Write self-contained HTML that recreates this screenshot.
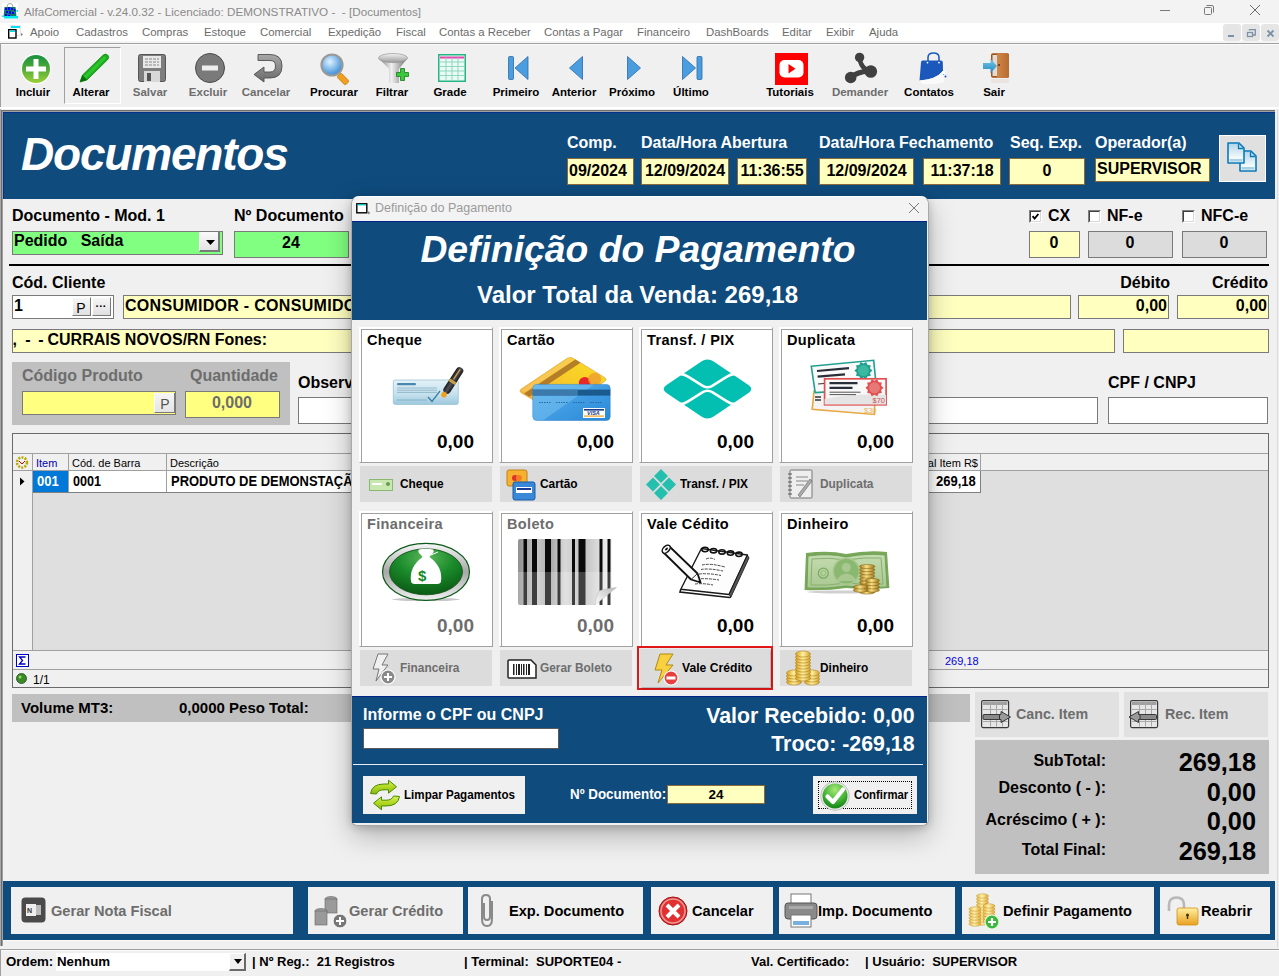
<!DOCTYPE html>
<html><head><meta charset="utf-8"><title>AlfaComercial</title>
<style>
html,body{margin:0;padding:0;}
body{width:1279px;height:976px;position:relative;overflow:hidden;background:#f0f0f0;font-family:"Liberation Sans",sans-serif;}
.a{position:absolute;}
.t{position:absolute;white-space:nowrap;font-weight:bold;}
svg.a{overflow:visible;}
</style></head><body>

<div class="a" style="left:0px;top:0px;width:1279px;height:23px;background:#f3f3f3;"></div>
<svg class="a" style="left:2px;top:3px" width="16" height="16" viewBox="0 0 16 16"><rect x="0" y="0" width="16" height="16" fill="#fff"/><path d="M5 4 Q5 0.5 8 0.5 Q11 0.5 11 4" fill="none" stroke="#a8a8a8" stroke-width="1"/><path d="M2.5 4 H13.5 L14.5 14 H1.5 Z" fill="#107868"/><g fill="#0000ff"><rect x="3" y="5" width="2" height="2"/><rect x="6" y="4" width="2" height="3"/><rect x="9" y="5" width="2" height="2"/><rect x="12" y="6" width="1.5" height="2"/><rect x="4" y="8" width="2" height="2"/><rect x="7" y="8" width="2" height="3"/><rect x="10" y="9" width="2" height="2"/><rect x="3" y="11" width="2" height="2"/><rect x="6" y="12" width="2" height="2"/></g><rect x="2" y="13" width="14" height="2.5" fill="#00e8f0"/><rect x="14.5" y="7" width="1.5" height="2" fill="#00e8f0"/><rect x="0" y="12.5" width="1.5" height="1.5" fill="#00e8f0"/></svg>
<div class="t" style="top:6.06px;font-size:11.7px;line-height:11.7px;color:#8a8a8a;font-weight:normal;left:24px;">AlfaComercial - v.24.0.32 - Licenciado: DEMONSTRATIVO -&nbsp; - [Documentos]</div>
<div class="a" style="left:1160px;top:10px;width:10px;height:1px;background:#7a7a7a;"></div>
<svg class="a" style="left:1204px;top:5px" width="10" height="10" viewBox="0 0 10 10"><rect x="0.5" y="2.5" width="7" height="7" rx="1" fill="none" stroke="#7a7a7a"/><path d="M2.5 0.5 H8 Q9.5 0.5 9.5 2 V7.5" fill="none" stroke="#7a7a7a"/></svg>
<svg class="a" style="left:1250px;top:5px" width="10" height="10" viewBox="0 0 10 10"><path d="M0 0 L10 10 M10 0 L0 10" stroke="#6a6a6a" stroke-width="1"/></svg>
<div class="a" style="left:0px;top:23px;width:1279px;height:19px;background:#ffffff;"></div>
<svg class="a" style="left:8px;top:25px" width="16" height="14" viewBox="0 0 16 14"><rect x="2.5" y="0.5" width="10" height="10" fill="#fff" stroke="#e0e0e0" stroke-width="0.8"/><rect x="3" y="1" width="9" height="2" fill="#00e0f0"/><path d="M13 8 L15 9.5 L13 11 Z" fill="#777"/><rect x="0.7" y="4.7" width="7.3" height="8.3" fill="#fff" stroke="#000" stroke-width="1.4"/><rect x="1.5" y="5.5" width="5.5" height="1.5" fill="#00e0f0"/></svg>
<div class="t" style="top:27.31px;font-size:11.4px;line-height:11.4px;color:#6b6b6b;font-weight:normal;left:30px;">Apoio</div>
<div class="t" style="top:27.31px;font-size:11.4px;line-height:11.4px;color:#6b6b6b;font-weight:normal;left:76px;">Cadastros</div>
<div class="t" style="top:27.31px;font-size:11.4px;line-height:11.4px;color:#6b6b6b;font-weight:normal;left:142px;">Compras</div>
<div class="t" style="top:27.31px;font-size:11.4px;line-height:11.4px;color:#6b6b6b;font-weight:normal;left:204px;">Estoque</div>
<div class="t" style="top:27.31px;font-size:11.4px;line-height:11.4px;color:#6b6b6b;font-weight:normal;left:260px;">Comercial</div>
<div class="t" style="top:27.31px;font-size:11.4px;line-height:11.4px;color:#6b6b6b;font-weight:normal;left:328px;">Expedição</div>
<div class="t" style="top:27.31px;font-size:11.4px;line-height:11.4px;color:#6b6b6b;font-weight:normal;left:396px;">Fiscal</div>
<div class="t" style="top:27.31px;font-size:11.4px;line-height:11.4px;color:#6b6b6b;font-weight:normal;left:439px;">Contas a Receber</div>
<div class="t" style="top:27.31px;font-size:11.4px;line-height:11.4px;color:#6b6b6b;font-weight:normal;left:544px;">Contas a Pagar</div>
<div class="t" style="top:27.31px;font-size:11.4px;line-height:11.4px;color:#6b6b6b;font-weight:normal;left:637px;">Financeiro</div>
<div class="t" style="top:27.31px;font-size:11.4px;line-height:11.4px;color:#6b6b6b;font-weight:normal;left:706px;">DashBoards</div>
<div class="t" style="top:27.31px;font-size:11.4px;line-height:11.4px;color:#6b6b6b;font-weight:normal;left:782px;">Editar</div>
<div class="t" style="top:27.31px;font-size:11.4px;line-height:11.4px;color:#6b6b6b;font-weight:normal;left:826px;">Exibir</div>
<div class="t" style="top:27.31px;font-size:11.4px;line-height:11.4px;color:#6b6b6b;font-weight:normal;left:869px;">Ajuda</div>
<div class="a" style="left:1223px;top:24px;width:18px;height:17px;background:#e5e5e5;border-radius:3px;"></div>
<div class="a" style="left:1242px;top:24px;width:18px;height:17px;background:#e5e5e5;border-radius:3px;"></div>
<div class="a" style="left:1261px;top:24px;width:18px;height:17px;background:#e5e5e5;border-radius:3px;"></div>
<div class="a" style="left:1228px;top:35px;width:6px;height:2px;background:#7b91a8;"></div>
<svg class="a" style="left:1247px;top:29px" width="9" height="8" viewBox="0 0 9 8"><rect x="0.5" y="3.5" width="5" height="4" fill="none" stroke="#7b91a8" stroke-width="1.3"/><path d="M2.5 1.5 V0.7 H8.3 V6 H6" fill="none" stroke="#7b91a8" stroke-width="1.3"/></svg>
<svg class="a" style="left:1267px;top:30px" width="7" height="7" viewBox="0 0 7 7"><path d="M0.5 0.5 L6.5 6.5 M6.5 0.5 L0.5 6.5" stroke="#7b91a8" stroke-width="1.8"/></svg>
<div class="a" style="left:0px;top:41px;width:1279px;height:2px;background:#f4f4f4;"></div>
<div class="a" style="left:0px;top:43px;width:1279px;height:1px;background:#a0a0a0;"></div>
<div class="a" style="left:0px;top:44px;width:1279px;height:64px;background:#f0f0f0;"></div>
<div class="a" style="left:1px;top:44px;width:1279px;height:1px;background:#fafafa;"></div>
<div class="a" style="left:0px;top:43px;width:1px;height:65px;background:#a0a0a0;"></div>
<div class="a" style="left:0px;top:107px;width:1279px;height:2px;background:#ffffff;"></div>
<div class="a" style="left:0px;top:109px;width:1279px;height:1px;background:#a0a0a0;"></div>
<div class="a" style="left:64px;top:47px;width:55px;height:55px;border-top:1px solid #a0a0a0;border-left:1px solid #a0a0a0;border-right:1px solid #fff;border-bottom:1px solid #fff;"></div>
<div class="t" style="top:86.72px;font-size:11.5px;line-height:11.5px;color:#000;left:-367px;width:800px;text-align:center;">Incluir</div>
<div class="t" style="top:86.72px;font-size:11.5px;line-height:11.5px;color:#000;left:-309px;width:800px;text-align:center;">Alterar</div>
<div class="t" style="top:86.72px;font-size:11.5px;line-height:11.5px;color:#6d6d6d;left:-250px;width:800px;text-align:center;">Salvar</div>
<div class="t" style="top:86.72px;font-size:11.5px;line-height:11.5px;color:#6d6d6d;left:-192px;width:800px;text-align:center;">Excluir</div>
<div class="t" style="top:86.72px;font-size:11.5px;line-height:11.5px;color:#6d6d6d;left:-134px;width:800px;text-align:center;">Cancelar</div>
<div class="t" style="top:86.72px;font-size:11.5px;line-height:11.5px;color:#000;left:-66px;width:800px;text-align:center;">Procurar</div>
<div class="t" style="top:86.72px;font-size:11.5px;line-height:11.5px;color:#000;left:-8px;width:800px;text-align:center;">Filtrar</div>
<div class="t" style="top:86.72px;font-size:11.5px;line-height:11.5px;color:#000;left:50px;width:800px;text-align:center;">Grade</div>
<div class="t" style="top:86.72px;font-size:11.5px;line-height:11.5px;color:#000;left:116px;width:800px;text-align:center;">Primeiro</div>
<div class="t" style="top:86.72px;font-size:11.5px;line-height:11.5px;color:#000;left:174px;width:800px;text-align:center;">Anterior</div>
<div class="t" style="top:86.72px;font-size:11.5px;line-height:11.5px;color:#000;left:232px;width:800px;text-align:center;">Próximo</div>
<div class="t" style="top:86.72px;font-size:11.5px;line-height:11.5px;color:#000;left:291px;width:800px;text-align:center;">Último</div>
<div class="t" style="top:86.72px;font-size:11.5px;line-height:11.5px;color:#000;left:390px;width:800px;text-align:center;">Tutoriais</div>
<div class="t" style="top:86.72px;font-size:11.5px;line-height:11.5px;color:#6d6d6d;left:460px;width:800px;text-align:center;">Demander</div>
<div class="t" style="top:86.72px;font-size:11.5px;line-height:11.5px;color:#000;left:529px;width:800px;text-align:center;">Contatos</div>
<div class="t" style="top:86.72px;font-size:11.5px;line-height:11.5px;color:#000;left:594px;width:800px;text-align:center;">Sair</div>
<svg class="a" style="left:20px;top:53px" width="32" height="32" viewBox="0 0 32 32"><defs><linearGradient id="gi" x1="0" y1="0" x2="0" y2="1"><stop offset="0" stop-color="#1a9040"/><stop offset="0.45" stop-color="#4aa838"/><stop offset="1" stop-color="#9ad038"/></linearGradient></defs><circle cx="16" cy="16" r="15.2" fill="#fff"/><circle cx="16" cy="16" r="14" fill="url(#gi)"/><path d="M13.5 6 H18.5 V13.5 H26 V18.5 H18.5 V26 H13.5 V18.5 H6 V13.5 H13.5 Z" fill="#fff"/></svg>
<svg class="a" style="left:78px;top:52px" width="32" height="32" viewBox="0 0 32 32"><path d="M2 30 L4.5 23 L25 3.2 Q27.5 1 29.8 3.2 Q31.8 5.5 29.5 7.8 L9 28 Z" fill="#18b018" stroke="#0a800a" stroke-width="0.7"/><path d="M5.5 24.5 L26.5 4 L28.5 6 L8 26.5 Z" fill="#40d040" opacity="0.6"/><path d="M2 30 L4.5 23 L9 28 Z" fill="#087008"/></svg>
<svg class="a" style="left:138px;top:54px" width="28" height="28" viewBox="0 0 28 28"><rect x="0.5" y="0.5" width="27" height="27" rx="2" fill="#7d7d7d" stroke="#555"/><rect x="5" y="2" width="18" height="12" fill="#e8e8e8"/><path d="M7 5 H21 M7 8 H21 M7 11 H21" stroke="#888" stroke-width="1" stroke-dasharray="3 1"/><rect x="6" y="17" width="16" height="11" fill="#d8d8d8"/><rect x="9" y="19" width="4" height="8" fill="#555"/></svg>
<svg class="a" style="left:195px;top:53px" width="30" height="30" viewBox="0 0 30 30"><circle cx="15" cy="15" r="14.5" fill="#7a7a7a" stroke="#4a4a4a"/><rect x="7" y="12.5" width="16" height="5" fill="#eee"/></svg>
<svg class="a" style="left:253px;top:54px" width="30" height="29" viewBox="0 0 30 29"><defs><linearGradient id="arr" x1="0" y1="0" x2="0" y2="1"><stop offset="0" stop-color="#a8a8a8"/><stop offset="1" stop-color="#6a6a6a"/></linearGradient></defs><path d="M5 0.5 H17 Q29 0.5 29 12 Q29 24 17 24 H11 V28 L1 20.5 L11 13 V18 H17 Q22.5 18 22.5 12 Q22.5 6.5 17 6.5 H5 Z" fill="url(#arr)" stroke="#505050" stroke-width="0.9" stroke-linejoin="round"/></svg>
<svg class="a" style="left:320px;top:53px" width="32" height="32" viewBox="0 0 32 32"><defs><radialGradient id="lens" cx="40%" cy="35%" r="65%"><stop offset="0" stop-color="#dff2ff"/><stop offset="1" stop-color="#3a8ed8"/></radialGradient></defs><rect x="20" y="20" width="6" height="12" rx="2" transform="rotate(-45 23 26)" fill="#f0a020" stroke="#b07010" stroke-width="0.6"/><circle cx="12" cy="12" r="10.5" fill="url(#lens)" stroke="#999" stroke-width="2.2"/></svg>
<svg class="a" style="left:378px;top:53px" width="32" height="31" viewBox="0 0 32 31"><defs><linearGradient id="fun" x1="0" x2="1"><stop offset="0" stop-color="#7a7a7a"/><stop offset="0.45" stop-color="#f0f0f0"/><stop offset="1" stop-color="#6a6a6a"/></linearGradient><linearGradient id="funt" x1="0" y1="0" x2="0" y2="1"><stop offset="0" stop-color="#f4f4f4"/><stop offset="1" stop-color="#9a9a9a"/></linearGradient></defs><path d="M0.5 5 Q15 13 29.5 5 L21 16 V30 L11 30 V16 Z" fill="url(#fun)"/><ellipse cx="15" cy="5" rx="14.5" ry="4.5" fill="url(#funt)" stroke="#8a8a8a" stroke-width="0.6"/><path d="M18.5 19.5 H22.5 V15.5 H26.5 V19.5 H30.5 V23.5 H26.5 V27.5 H22.5 V23.5 H18.5 Z" fill="#3cc83c" stroke="#1a7a1a" stroke-width="0.8"/></svg>
<svg class="a" style="left:438px;top:54px" width="28" height="28" viewBox="0 0 28 28"><rect x="0.75" y="0.75" width="26.5" height="26.5" fill="#eafaf4" stroke="#24b384" stroke-width="1.5"/><rect x="2" y="2.5" width="24" height="2" fill="#f040b0"/><path d="M2 8 H26 M2 12.5 H26 M2 17 H26 M2 21.5 H26" stroke="#7ccfb2" stroke-width="0.8"/><path d="M8 2 V26 M14 2 V26 M20 2 V26" stroke="#7ccfb2" stroke-width="0.8"/></svg>
<svg class="a" style="left:508px;top:56px" width="21" height="24" viewBox="0 0 21 24"><rect x="0.5" y="0.5" width="5" height="23" rx="1" fill="#4a9ee0" stroke="#2a6aa8" stroke-width="0.8"/><path d="M20 0.5 V23.5 L7 12 Z" fill="#4a9ee0" stroke="#2a6aa8" stroke-width="0.8" stroke-linejoin="round"/></svg>
<svg class="a" style="left:569px;top:56px" width="14" height="24" viewBox="0 0 14 24"><path d="M13.5 0.5 V23.5 L0.5 12 Z" fill="#4a9ee0" stroke="#2a6aa8" stroke-width="0.8" stroke-linejoin="round"/></svg>
<svg class="a" style="left:627px;top:56px" width="14" height="24" viewBox="0 0 14 24"><path d="M0.5 0.5 V23.5 L13.5 12 Z" fill="#4a9ee0" stroke="#2a6aa8" stroke-width="0.8" stroke-linejoin="round"/></svg>
<svg class="a" style="left:682px;top:56px" width="21" height="24" viewBox="0 0 21 24"><path d="M0.5 0.5 V23.5 L13.5 12 Z" fill="#4a9ee0" stroke="#2a6aa8" stroke-width="0.8" stroke-linejoin="round"/><rect x="15" y="0.5" width="5" height="23" rx="1" fill="#4a9ee0" stroke="#2a6aa8" stroke-width="0.8"/></svg>
<svg class="a" style="left:775px;top:53px" width="33" height="32" viewBox="0 0 33 32"><rect x="0" y="0" width="33" height="32" fill="#ff0000"/><rect x="4.5" y="7" width="24" height="17.5" rx="5" fill="#fff"/><path d="M13.5 11 L20.5 15.75 L13.5 20.5 Z" fill="#ff0000"/></svg>
<svg class="a" style="left:845px;top:52px" width="32" height="32" viewBox="0 0 32 32"><path d="M14.6 5.4 Q15.5 17 25.8 19.5" stroke="#404040" stroke-width="4.6" fill="none"/><path d="M5.7 25.5 Q14 18.5 25.8 19.5" stroke="#404040" stroke-width="5.2" fill="none"/><circle cx="14.6" cy="5.4" r="4.7" fill="#404040"/><circle cx="25.8" cy="19.5" r="6.3" fill="#404040"/><circle cx="5.7" cy="25.5" r="5.8" fill="#404040"/></svg>
<svg class="a" style="left:918px;top:52px" width="32" height="34" viewBox="0 0 32 34"><path d="M10 9 V5.5 Q10 1 15.5 1 Q21 1 21 5.5 V9" fill="none" stroke="#1e5bc0" stroke-width="1.6"/><path d="M4.5 8.5 H23 Q24.8 8.5 24.8 10.5 L25 19 Q18 27.5 1.5 28.5 L3 10.5 Q3.2 8.5 4.5 8.5 Z" fill="#1c58bc"/><circle cx="9.5" cy="10.6" r="0.9" fill="#fff"/><circle cx="21" cy="10.6" r="0.9" fill="#fff"/><path d="M1.5 28.5 Q18 27.5 25 19 L26 30 Q16 33 4 32 Z" fill="#fafafa"/><circle cx="27.5" cy="24.5" r="1" fill="#1c58bc"/><circle cx="25.5" cy="22.5" r="0.6" fill="#6a9ae0"/><rect x="24" y="19" width="3" height="3" fill="#fff"/></svg>
<svg class="a" style="left:982px;top:52px" width="30" height="32" viewBox="0 0 30 32"><defs><linearGradient id="arw" x1="0" y1="0" x2="0" y2="1"><stop offset="0" stop-color="#70c8e8"/><stop offset="1" stop-color="#2a88c0"/></linearGradient><linearGradient id="dor" x1="0" x2="1"><stop offset="0" stop-color="#d08848"/><stop offset="1" stop-color="#b86a30"/></linearGradient></defs><rect x="9" y="1.2" width="18" height="24.5" rx="1.8" fill="#a8501a"/><rect x="10.5" y="3" width="5" height="21" fill="#dcdcdc"/><rect x="15" y="1.5" width="12" height="24.2" rx="1.2" fill="url(#dor)"/><circle cx="17" cy="13" r="0.9" fill="#5a2008"/><path d="M1 11 H8.5 V7 L15 14 L8.5 21 V17 H1 Z" fill="url(#arw)"/><rect x="9" y="27" width="18" height="4" fill="#e4dcd4" opacity="0.6"/></svg>
<div class="a" style="left:0px;top:109px;width:1279px;height:837px;background:#f0f0f0;"></div>
<div class="a" style="left:0px;top:109px;width:1px;height:837px;background:#a8a8a8;"></div>
<div class="a" style="left:1px;top:110px;width:1274px;height:1px;background:#6f6f6f;"></div>
<div class="a" style="left:1px;top:110px;width:1px;height:836px;background:#6f6f6f;"></div>
<div class="a" style="left:2px;top:111px;width:1273px;height:1px;background:#a0a0a0;"></div>
<div class="a" style="left:2px;top:111px;width:1px;height:835px;background:#a0a0a0;"></div>
<div class="a" style="left:1275px;top:109px;width:4px;height:837px;background:#f0f0f0;"></div>
<div class="a" style="left:1277px;top:109px;width:1px;height:838px;background:#dcdcdc;"></div>
<div class="a" style="left:3px;top:112px;width:1272px;height:87px;background:#0f4b7d;border-top:1px solid #06308a;border-left:1px solid #06308a;box-sizing:border-box;"></div>
<div class="t" style="top:131.40px;font-size:46px;line-height:46px;color:#fff;font-style:italic;letter-spacing:-1.2px;left:21px;">Documentos</div>
<div class="t" style="top:134.90px;font-size:16px;line-height:16px;color:#fff;left:567px;">Comp.</div>
<div class="t" style="top:134.90px;font-size:16px;line-height:16px;color:#fff;left:641px;">Data/Hora Abertura</div>
<div class="t" style="top:134.90px;font-size:16px;line-height:16px;color:#fff;left:819px;">Data/Hora Fechamento</div>
<div class="t" style="top:134.90px;font-size:16px;line-height:16px;color:#fff;left:1010px;">Seq. Exp.</div>
<div class="t" style="top:134.90px;font-size:16px;line-height:16px;color:#fff;left:1095px;">Operador(a)</div>
<div class="a" style="left:567px;top:158px;width:65px;height:25px;background:#ffffc0;border:1px solid #8a6a3a;"></div>
<div class="t" style="top:163.40px;font-size:16px;line-height:16px;color:#000;left:569px;">09/2024</div>
<div class="a" style="left:641px;top:158px;width:86px;height:25px;background:#ffffc0;border:1px solid #8a6a3a;"></div>
<div class="t" style="top:163.40px;font-size:16px;line-height:16px;color:#000;left:285.0px;width:800px;text-align:center;">12/09/2024</div>
<div class="a" style="left:737px;top:158px;width:68px;height:25px;background:#ffffc0;border:1px solid #8a6a3a;"></div>
<div class="t" style="top:163.40px;font-size:16px;line-height:16px;color:#000;left:372.0px;width:800px;text-align:center;">11:36:55</div>
<div class="a" style="left:819px;top:158px;width:93px;height:25px;background:#ffffc0;border:1px solid #8a6a3a;"></div>
<div class="t" style="top:163.40px;font-size:16px;line-height:16px;color:#000;left:466.5px;width:800px;text-align:center;">12/09/2024</div>
<div class="a" style="left:923px;top:158px;width:76px;height:25px;background:#ffffc0;border:1px solid #8a6a3a;"></div>
<div class="t" style="top:163.40px;font-size:16px;line-height:16px;color:#000;left:562.0px;width:800px;text-align:center;">11:37:18</div>
<div class="a" style="left:1009px;top:158px;width:74px;height:25px;background:#ffffc0;border:1px solid #8a6a3a;"></div>
<div class="t" style="top:163.40px;font-size:16px;line-height:16px;color:#000;left:647.0px;width:800px;text-align:center;">0</div>
<div class="a" style="left:1095px;top:158px;width:113px;height:22px;background:#ffffc0;border:1px solid #8a6a3a;"></div>
<div class="t" style="top:161.40px;font-size:16px;line-height:16px;color:#000;left:1097px;">SUPERVISOR</div>
<div class="a" style="left:1219px;top:135px;width:47px;height:47px;background:#e0e0e0;border:1px solid #fff;box-sizing:border-box;"></div>
<svg class="a" style="left:1227px;top:142px" width="32" height="32" viewBox="0 0 32 32"><defs><linearGradient id="docg" x1="0" y1="0" x2="0" y2="1"><stop offset="0" stop-color="#b0d4e8"/><stop offset="0.75" stop-color="#f4fafc"/></linearGradient></defs><path d="M13 9 H24 L29 14 V29 H13 Z" fill="url(#docg)" stroke="#0a7ab8" stroke-width="1.6" stroke-linejoin="round"/><path d="M23.5 10 V14.5 H28" fill="none" stroke="#0a7ab8" stroke-width="1.3"/><rect x="14.5" y="25" width="13" height="2.6" fill="#a8d0e4"/><path d="M1 1 H12 L17 6 V21 H1 Z" fill="url(#docg)" stroke="#0a7ab8" stroke-width="1.6" stroke-linejoin="round"/><path d="M11.5 2 V6.5 H16" fill="none" stroke="#0a7ab8" stroke-width="1.3"/><rect x="2.5" y="17" width="13" height="2.6" fill="#a8d0e4"/></svg>
<div class="t" style="top:208.40px;font-size:16px;line-height:16px;color:#000;left:12px;">Documento - Mod. 1</div>
<div class="t" style="top:208.40px;font-size:16px;line-height:16px;color:#000;left:234px;">Nº Documento</div>
<div class="a" style="left:12px;top:231px;width:209px;height:22px;background:#80ff80;border:1px solid #7a7a7a;"></div>
<div class="t" style="top:233.40px;font-size:16px;line-height:16px;color:#000;left:14px;">Pedido&nbsp;&nbsp; Saída</div>
<div class="a" style="left:199px;top:232px;width:21px;height:20px;background:linear-gradient(#fafafa,#e4e4e4);border-left:1px solid #fff;border-right:2px solid #7a7a7a;border-bottom:2px solid #7a7a7a;box-sizing:border-box;"></div>
<svg class="a" style="left:206px;top:240px" width="9" height="5" viewBox="0 0 9 5"><path d="M0 0 H9 L4.5 5 Z" fill="#000"/></svg>
<div class="a" style="left:234px;top:231px;width:113px;height:25px;background:#80ff80;border:1px solid #7a7a7a;"></div>
<div class="t" style="top:235.40px;font-size:16px;line-height:16px;color:#000;left:-109px;width:800px;text-align:center;">24</div>
<div class="a" style="left:1029px;top:210px;width:13px;height:13px;background:#fff;border-top:1px solid #808080;border-left:1px solid #808080;border-right:1px solid #fff;border-bottom:1px solid #fff;box-sizing:border-box;"></div>
<div class="a" style="left:1030px;top:211px;width:11px;height:11px;border-top:1px solid #404040;border-left:1px solid #404040;border-right:1px solid #d8d8d8;border-bottom:1px solid #d8d8d8;box-sizing:border-box;"></div>
<svg class="a" style="left:1032px;top:213px" width="7" height="7" viewBox="0 0 7 7"><path d="M0.6 3.2 L2.6 5.6 L6.4 1" stroke="#000" stroke-width="1.9" fill="none"/></svg>
<div class="t" style="top:208.40px;font-size:16px;line-height:16px;color:#000;left:1048px;">CX</div>
<div class="a" style="left:1088px;top:210px;width:13px;height:13px;background:#fff;border-top:1px solid #808080;border-left:1px solid #808080;border-right:1px solid #fff;border-bottom:1px solid #fff;box-sizing:border-box;"></div>
<div class="a" style="left:1089px;top:211px;width:11px;height:11px;border-top:1px solid #404040;border-left:1px solid #404040;border-right:1px solid #d8d8d8;border-bottom:1px solid #d8d8d8;box-sizing:border-box;"></div>
<div class="t" style="top:208.40px;font-size:16px;line-height:16px;color:#000;left:1107px;">NF-e</div>
<div class="a" style="left:1182px;top:210px;width:13px;height:13px;background:#fff;border-top:1px solid #808080;border-left:1px solid #808080;border-right:1px solid #fff;border-bottom:1px solid #fff;box-sizing:border-box;"></div>
<div class="a" style="left:1183px;top:211px;width:11px;height:11px;border-top:1px solid #404040;border-left:1px solid #404040;border-right:1px solid #d8d8d8;border-bottom:1px solid #d8d8d8;box-sizing:border-box;"></div>
<div class="t" style="top:208.40px;font-size:16px;line-height:16px;color:#000;left:1201px;">NFC-e</div>
<div class="a" style="left:1029px;top:231px;width:49px;height:25px;background:#ffffc0;border:1px solid #7a7a7a;"></div>
<div class="t" style="top:235.40px;font-size:16px;line-height:16px;color:#000;left:654px;width:800px;text-align:center;">0</div>
<div class="a" style="left:1088px;top:231px;width:83px;height:25px;background:#dcdcdc;border:1px solid #7a7a7a;"></div>
<div class="t" style="top:235.40px;font-size:16px;line-height:16px;color:#000;left:730px;width:800px;text-align:center;">0</div>
<div class="a" style="left:1182px;top:231px;width:83px;height:25px;background:#dcdcdc;border:1px solid #7a7a7a;"></div>
<div class="t" style="top:235.40px;font-size:16px;line-height:16px;color:#000;left:824px;width:800px;text-align:center;">0</div>
<div class="a" style="left:9px;top:264px;width:1260px;height:2px;background:#000;"></div>
<div class="t" style="top:275.40px;font-size:16px;line-height:16px;color:#000;left:12px;">Cód. Cliente</div>
<div class="t" style="top:275.40px;font-size:16px;line-height:16px;color:#000;right:109px;text-align:right;">Débito</div>
<div class="t" style="top:275.40px;font-size:16px;line-height:16px;color:#000;right:11px;text-align:right;">Crédito</div>
<div class="a" style="left:12px;top:295px;width:100px;height:22px;background:#ffffff;border:1px solid #7a7a7a;"></div>
<div class="t" style="top:298.40px;font-size:16px;line-height:16px;color:#000;left:14px;">1</div>
<div class="a" style="left:72px;top:297px;width:19px;height:19px;background:linear-gradient(#f6f6f6,#e0e0e0);border-right:1px solid #7a7a7a;border-bottom:1px solid #7a7a7a;border-left:1px solid #fff;border-top:1px solid #fff;box-sizing:border-box;"></div>
<div class="a" style="left:92px;top:297px;width:19px;height:19px;background:linear-gradient(#f6f6f6,#e0e0e0);border-right:1px solid #7a7a7a;border-bottom:1px solid #7a7a7a;border-left:1px solid #fff;border-top:1px solid #fff;box-sizing:border-box;"></div>
<div class="t" style="top:301.10px;font-size:14px;line-height:14px;color:#000;font-weight:normal;left:-319px;width:800px;text-align:center;">P</div>
<div class="t" style="top:300.65px;font-size:11px;line-height:11px;color:#000;left:-299px;width:800px;text-align:center;">···</div>
<div class="a" style="left:123px;top:295px;width:946px;height:22px;background:#ffffc0;border:1px solid #7a7a7a;"></div>
<div class="t" style="top:298.40px;font-size:16px;line-height:16px;color:#000;letter-spacing:0.3px;left:125px;">CONSUMIDOR - CONSUMIDOR</div>
<div class="a" style="left:1078px;top:295px;width:89px;height:22px;background:#ffffc0;border:1px solid #7a7a7a;"></div>
<div class="t" style="top:298.40px;font-size:16px;line-height:16px;color:#000;right:112px;text-align:right;">0,00</div>
<div class="a" style="left:1177px;top:295px;width:90px;height:22px;background:#ffffc0;border:1px solid #7a7a7a;"></div>
<div class="t" style="top:298.40px;font-size:16px;line-height:16px;color:#000;right:12px;text-align:right;">0,00</div>
<div class="a" style="left:12px;top:329px;width:1101px;height:22px;background:#ffffc0;border:1px solid #7a7a7a;"></div>
<div class="t" style="top:331.90px;font-size:16px;line-height:16px;color:#000;left:12.5px;">,</div>
<div class="t" style="top:331.90px;font-size:16px;line-height:16px;color:#000;left:25.2px;">-</div>
<div class="t" style="top:331.90px;font-size:16px;line-height:16px;color:#000;left:38.2px;">-</div>
<div class="t" style="top:331.90px;font-size:16px;line-height:16px;color:#000;left:47.5px;">CURRAIS NOVOS/RN Fones:</div>
<div class="a" style="left:1123px;top:329px;width:144px;height:22px;background:#ffffc0;border:1px solid #7a7a7a;"></div>
<div class="a" style="left:12px;top:362px;width:278px;height:63px;background:#c0c0c0;"></div>
<div class="t" style="top:368.40px;font-size:16px;line-height:16px;color:#6d6d6d;left:22px;">Código Produto</div>
<div class="t" style="top:368.40px;font-size:16px;line-height:16px;color:#6d6d6d;left:190px;">Quantidade</div>
<div class="a" style="left:22px;top:391px;width:152px;height:22px;background:#ffff80;border:1px solid #7a7a7a;"></div>
<div class="a" style="left:154px;top:393px;width:21px;height:20px;background:linear-gradient(#f6f6f6,#e4e4e4);border-right:1px solid #7a7a7a;border-bottom:1px solid #7a7a7a;border-left:1px solid #fff;box-sizing:border-box;"></div>
<div class="t" style="top:397.10px;font-size:14px;line-height:14px;color:#555;font-weight:normal;left:-235px;width:800px;text-align:center;">P</div>
<div class="a" style="left:185px;top:391px;width:93px;height:25px;background:#ffff80;border:1px solid #7a7a7a;"></div>
<div class="t" style="top:395.40px;font-size:16px;line-height:16px;color:#6d6d6d;left:-168px;width:800px;text-align:center;">0,000</div>
<div class="t" style="top:375.40px;font-size:16px;line-height:16px;color:#000;left:298px;">Observação</div>
<div class="a" style="left:298px;top:397px;width:798px;height:25px;background:#ffffff;border:1px solid #7a7a7a;"></div>
<div class="t" style="top:375.40px;font-size:16px;line-height:16px;color:#000;left:1108px;">CPF / CNPJ</div>
<div class="a" style="left:1108px;top:397px;width:158px;height:25px;background:#ffffff;border:1px solid #7a7a7a;"></div>
<div class="a" style="left:12px;top:433px;width:1255px;height:253px;border:1px solid #6a6a6a;background:#f0f0f0;"></div>
<div class="a" style="left:13px;top:453px;width:1255px;height:1px;background:#a0a0a0;"></div>
<div class="a" style="left:13px;top:454px;width:1255px;height:16px;background:#f0f0f0;"></div>
<div class="a" style="left:13px;top:470px;width:1255px;height:1px;background:#a0a0a0;"></div>
<div class="a" style="left:33px;top:471px;width:1235px;height:179px;background:#dfdfdf;"></div>
<div class="a" style="left:13px;top:471px;width:19px;height:179px;background:#f0f0f0;"></div>
<div class="a" style="left:32px;top:454px;width:1px;height:196px;background:#a0a0a0;"></div>
<div class="a" style="left:68px;top:454px;width:1px;height:16px;background:#a0a0a0;"></div>
<div class="a" style="left:166px;top:454px;width:1px;height:16px;background:#a0a0a0;"></div>
<div class="a" style="left:980px;top:454px;width:1px;height:16px;background:#a0a0a0;"></div>
<div class="t" style="top:457.65px;font-size:11px;line-height:11px;color:#0000b0;font-weight:normal;left:36px;">Item</div>
<div class="t" style="top:457.65px;font-size:11px;line-height:11px;color:#000;font-weight:normal;left:72px;">Cód. de Barra</div>
<div class="t" style="top:457.65px;font-size:11px;line-height:11px;color:#000;font-weight:normal;left:170px;">Descrição</div>
<div class="t" style="top:457.65px;font-size:11px;line-height:11px;color:#000;font-weight:normal;right:301px;text-align:right;">Total Item R$</div>
<svg class="a" style="left:15px;top:456px" width="14" height="13" viewBox="0 0 14 13"><circle cx="7" cy="6.5" r="5" fill="none" stroke="#b8a800" stroke-width="2.5" stroke-dasharray="2 1.2"/><path d="M4 5 L7 8 L10 5" stroke="#c00" stroke-width="1" fill="none"/></svg>
<div class="a" style="left:33px;top:471px;width:948px;height:21px;background:#ffffff;"></div>
<div class="a" style="left:33px;top:471px;width:35px;height:21px;background:#0078d7;"></div>
<div class="a" style="left:33px;top:492px;width:948px;height:1px;background:#808080;"></div>
<div class="a" style="left:68px;top:471px;width:1px;height:21px;background:#a0a0a0;"></div>
<div class="a" style="left:166px;top:471px;width:1px;height:21px;background:#a0a0a0;"></div>
<div class="a" style="left:980px;top:471px;width:1px;height:21px;background:#808080;"></div>
<div class="t" style="top:474.40px;font-size:14px;line-height:14px;color:#fff;transform:scaleX(0.93);transform-origin:left center;left:37px;">001</div>
<div class="t" style="top:474.40px;font-size:14px;line-height:14px;color:#000;transform:scaleX(0.9);transform-origin:left center;left:73px;">0001</div>
<div class="t" style="top:474.40px;font-size:14px;line-height:14px;color:#000;transform:scaleX(0.925);transform-origin:left center;left:171px;">PRODUTO DE DEMONSTAÇÃO</div>
<div class="t" style="top:474.40px;font-size:14px;line-height:14px;color:#000;transform:scaleX(0.93);transform-origin:right center;right:303px;text-align:right;">269,18</div>
<svg class="a" style="left:19px;top:477px" width="6" height="9" viewBox="0 0 6 9"><path d="M1 0.5 L5.5 4.5 L1 8.5 Z" fill="#000"/></svg>
<div class="a" style="left:13px;top:650px;width:1255px;height:1px;background:#a0a0a0;"></div>
<div class="a" style="left:13px;top:651px;width:1255px;height:19px;background:#f0f0f0;"></div>
<div class="a" style="left:13px;top:669px;width:1255px;height:1px;background:#a0a0a0;"></div>
<svg class="a" style="left:16px;top:654px" width="13" height="13" viewBox="0 0 13 13"><rect x="0.5" y="0.5" width="12" height="12" fill="#fff" stroke="#0000c0"/><path d="M9.5 3 H3.5 L6.5 6.5 L3.5 10 H9.5" fill="none" stroke="#0000c0" stroke-width="1.3"/></svg>
<div class="t" style="top:655.95px;font-size:11px;line-height:11px;color:#0000e0;font-weight:normal;left:945px;">269,18</div>
<svg class="a" style="left:16px;top:673px" width="11" height="11" viewBox="0 0 11 11"><circle cx="5.5" cy="5.5" r="5" fill="#3a8a2a" stroke="#1a4a1a" stroke-width="0.8"/><circle cx="4" cy="4" r="1.5" fill="#9d5"/></svg>
<div class="t" style="top:673.80px;font-size:12px;line-height:12px;color:#000;font-weight:normal;left:33px;">1/1</div>
<div class="a" style="left:12px;top:694px;width:958px;height:28px;background:#c0c0c0;"></div>
<div class="t" style="top:700.25px;font-size:15px;line-height:15px;color:#000;left:21px;">Volume MT3:</div>
<div class="t" style="top:700.25px;font-size:15px;line-height:15px;color:#000;left:179px;">0,0000 Peso Total:</div>
<div class="a" style="left:975px;top:692px;width:144px;height:45px;background:#e1e1e1;"></div>
<div class="t" style="top:706.25px;font-size:15px;line-height:15px;color:#6d6d6d;transform:scaleX(0.95);transform-origin:left center;left:1016px;">Canc. Item</div>
<svg class="a" style="left:981px;top:700px" width="32" height="29" viewBox="0 0 32 29"><rect x="0.6" y="0.6" width="27" height="27" rx="1.5" fill="#e6e6e6" stroke="#3a3a3a" stroke-width="1.2"/><rect x="2" y="2" width="24.4" height="3" fill="#a0a0a0"/><path d="M9.5 2 V26.5 M15.5 2 V26.5 M21.5 2 V26.5 M2 9.5 H26.5 M2 15.5 H26.5 M2 21.5 H26.5" stroke="#a8a8a8" stroke-width="1"/><rect x="2" y="14.5" width="17" height="5" rx="1" fill="#8a8a8a" stroke="#2a2a2a" stroke-width="0.9"/><path d="M20 11.5 L29.5 17 L20 22.5 V19.5 H18.5 V14.5 H20 Z" fill="#9a9a9a" stroke="#2a2a2a" stroke-width="0.9" stroke-linejoin="round"/></svg>
<div class="a" style="left:1124px;top:692px;width:144px;height:45px;background:#e1e1e1;"></div>
<div class="t" style="top:706.25px;font-size:15px;line-height:15px;color:#6d6d6d;transform:scaleX(0.95);transform-origin:left center;left:1165px;">Rec. Item</div>
<svg class="a" style="left:1130px;top:700px" width="32" height="29" viewBox="0 0 32 29"><rect x="0.6" y="0.6" width="27" height="27" rx="1.5" fill="#e6e6e6" stroke="#3a3a3a" stroke-width="1.2"/><rect x="2" y="2" width="24.4" height="3" fill="#a0a0a0"/><path d="M9.5 2 V26.5 M15.5 2 V26.5 M21.5 2 V26.5 M2 9.5 H26.5 M2 15.5 H26.5 M2 21.5 H26.5" stroke="#a8a8a8" stroke-width="1"/><rect x="9.5" y="14.5" width="17" height="5" rx="1" fill="#8a8a8a" stroke="#2a2a2a" stroke-width="0.9"/><path d="M8.5 11.5 L-1 17 L8.5 22.5 V19.5 H10 V14.5 H8.5 Z" fill="#9a9a9a" stroke="#2a2a2a" stroke-width="0.9" stroke-linejoin="round"/></svg>
<div class="a" style="left:975px;top:740px;width:294px;height:134px;background:#c0c0c0;"></div>
<div class="t" style="top:753.40px;font-size:16px;line-height:16px;color:#000;right:173px;text-align:right;">SubTotal:</div>
<div class="t" style="top:749.50px;font-size:25.3px;line-height:25.3px;color:#000;right:23px;text-align:right;">269,18</div>
<div class="t" style="top:780.40px;font-size:16px;line-height:16px;color:#000;right:173px;text-align:right;">Desconto ( - ):</div>
<div class="t" style="top:779.50px;font-size:25.3px;line-height:25.3px;color:#000;right:23px;text-align:right;">0,00</div>
<div class="t" style="top:812.40px;font-size:16px;line-height:16px;color:#000;right:173px;text-align:right;">Acréscimo ( + ):</div>
<div class="t" style="top:808.50px;font-size:25.3px;line-height:25.3px;color:#000;right:23px;text-align:right;">0,00</div>
<div class="t" style="top:842.40px;font-size:16px;line-height:16px;color:#000;right:173px;text-align:right;">Total Final:</div>
<div class="t" style="top:838.50px;font-size:25.3px;line-height:25.3px;color:#000;right:23px;text-align:right;">269,18</div>
<div class="a" style="left:3px;top:881px;width:1272px;height:59px;background:#0f4b7d;"></div>
<div class="a" style="left:3px;top:940px;width:1272px;height:1px;background:#fafafa;"></div>
<div class="a" style="left:11px;top:887px;width:282px;height:47px;background:#f0f0f0;"></div>
<div class="t" style="top:903.59px;font-size:14.6px;line-height:14.6px;color:#6d6d6d;left:51px;">Gerar Nota Fiscal</div>
<div class="a" style="left:308px;top:887px;width:155px;height:47px;background:#f0f0f0;"></div>
<div class="t" style="top:903.59px;font-size:14.6px;line-height:14.6px;color:#6d6d6d;left:349px;">Gerar Crédito</div>
<div class="a" style="left:468px;top:887px;width:175px;height:47px;background:#f0f0f0;"></div>
<div class="t" style="top:903.59px;font-size:14.6px;line-height:14.6px;color:#000;left:509px;">Exp. Documento</div>
<div class="a" style="left:651px;top:887px;width:122px;height:47px;background:#f0f0f0;"></div>
<div class="t" style="top:903.59px;font-size:14.6px;line-height:14.6px;color:#000;left:692px;">Cancelar</div>
<div class="a" style="left:779px;top:887px;width:176px;height:47px;background:#f0f0f0;"></div>
<div class="t" style="top:903.59px;font-size:14.6px;line-height:14.6px;color:#000;left:818px;">Imp. Documento</div>
<div class="a" style="left:962px;top:887px;width:192px;height:47px;background:#f0f0f0;"></div>
<div class="t" style="top:903.59px;font-size:14.6px;line-height:14.6px;color:#000;left:1003px;">Definir Pagamento</div>
<div class="a" style="left:1160px;top:887px;width:110px;height:47px;background:#f0f0f0;"></div>
<div class="t" style="top:903.59px;font-size:14.6px;line-height:14.6px;color:#000;left:1201px;">Reabrir</div>
<svg class="a" style="left:21px;top:897px" width="25" height="26" viewBox="0 0 25 26"><rect x="0.5" y="0.5" width="24" height="25" rx="4" fill="#4a4a4a"/><rect x="5" y="7" width="10" height="12" fill="#eee"/><text x="6" y="16" font-size="7" font-weight="bold" fill="#333" font-family="Liberation Sans">N</text><rect x="15" y="8" width="5" height="10" fill="#bbb"/></svg>
<svg class="a" style="left:313px;top:893px" width="36" height="36" viewBox="0 0 36 36"><g fill="#9a9a9a" stroke="#666" stroke-width="0.6"><ellipse cx="18" cy="6" rx="6" ry="2.5"/><rect x="12" y="6" width="12" height="14"/><ellipse cx="8" cy="18" rx="6" ry="2.5"/><rect x="2" y="18" width="12" height="14"/></g><circle cx="27" cy="28" r="7" fill="#777" stroke="#fff" stroke-width="1"/><path d="M27 24 V32 M23 28 H31" stroke="#fff" stroke-width="2"/></svg>
<svg class="a" style="left:478px;top:893px" width="20" height="36" viewBox="0 0 20 36"><path d="M14 8 V26 Q14 33 9 33 Q4 33 4 26 V6 Q4 2 8 2 Q12 2 12 6 V24 Q12 27 9 27 Q6 27 6 24 V10" fill="none" stroke="#8a8a8a" stroke-width="2"/></svg>
<svg class="a" style="left:658px;top:896px" width="30" height="30" viewBox="0 0 30 30"><circle cx="15" cy="15" r="14" fill="#e03030" stroke="#a01010" stroke-width="1"/><circle cx="15" cy="15" r="12" fill="none" stroke="#fff" stroke-width="1.5" opacity="0.5"/><path d="M9 9 L21 21 M21 9 L9 21" stroke="#fff" stroke-width="4"/></svg>
<svg class="a" style="left:784px;top:893px" width="34" height="36" viewBox="0 0 34 36"><rect x="7" y="1" width="20" height="10" fill="#fff" stroke="#777"/><rect x="1" y="10" width="32" height="16" rx="3" fill="#8a8a8a" stroke="#555"/><rect x="5" y="13" width="24" height="3" fill="#aaa"/><rect x="7" y="22" width="20" height="12" fill="#fff" stroke="#777"/><rect x="9" y="28" width="16" height="4" fill="#7ab0e0"/></svg>
<svg class="a" style="left:967px;top:893px" width="36" height="38" viewBox="0 0 36 38"><defs><linearGradient id="cg3" x1="0" x2="1"><stop offset="0" stop-color="#e8b840"/><stop offset="0.45" stop-color="#fff0b0"/><stop offset="1" stop-color="#e0a830"/></linearGradient></defs><ellipse cx="15.5" cy="30.0" rx="6.0" ry="2.2" fill="url(#cg3)" stroke="#c09020" stroke-width="0.5"/><ellipse cx="15.5" cy="27.0" rx="6.0" ry="2.2" fill="url(#cg3)" stroke="#c09020" stroke-width="0.5"/><ellipse cx="15.5" cy="24.0" rx="6.0" ry="2.2" fill="url(#cg3)" stroke="#c09020" stroke-width="0.5"/><ellipse cx="15.5" cy="21.0" rx="6.0" ry="2.2" fill="url(#cg3)" stroke="#c09020" stroke-width="0.5"/><ellipse cx="15.5" cy="18.0" rx="6.0" ry="2.2" fill="url(#cg3)" stroke="#c09020" stroke-width="0.5"/><ellipse cx="15.5" cy="15.0" rx="6.0" ry="2.2" fill="url(#cg3)" stroke="#c09020" stroke-width="0.5"/><ellipse cx="15.5" cy="12.0" rx="6.0" ry="2.2" fill="url(#cg3)" stroke="#c09020" stroke-width="0.5"/><ellipse cx="15.5" cy="9.0" rx="6.0" ry="2.2" fill="url(#cg3)" stroke="#c09020" stroke-width="0.5"/><ellipse cx="15.5" cy="6.0" rx="6.0" ry="2.2" fill="url(#cg3)" stroke="#c09020" stroke-width="0.5"/><ellipse cx="15.5" cy="3.0" rx="6.0" ry="2.2" fill="url(#cg3)" stroke="#c09020" stroke-width="0.5"/><ellipse cx="22" cy="28.0" rx="6.0" ry="2.2" fill="url(#cg3)" stroke="#c09020" stroke-width="0.5"/><ellipse cx="22" cy="25.0" rx="6.0" ry="2.2" fill="url(#cg3)" stroke="#c09020" stroke-width="0.5"/><ellipse cx="22" cy="22.0" rx="6.0" ry="2.2" fill="url(#cg3)" stroke="#c09020" stroke-width="0.5"/><ellipse cx="22" cy="19.0" rx="6.0" ry="2.2" fill="url(#cg3)" stroke="#c09020" stroke-width="0.5"/><ellipse cx="22" cy="16.0" rx="6.0" ry="2.2" fill="url(#cg3)" stroke="#c09020" stroke-width="0.5"/><ellipse cx="22" cy="13.0" rx="6.0" ry="2.2" fill="url(#cg3)" stroke="#c09020" stroke-width="0.5"/><ellipse cx="8" cy="31.0" rx="6.0" ry="2.2" fill="url(#cg3)" stroke="#c09020" stroke-width="0.5"/><ellipse cx="8" cy="28.0" rx="6.0" ry="2.2" fill="url(#cg3)" stroke="#c09020" stroke-width="0.5"/><ellipse cx="8" cy="25.0" rx="6.0" ry="2.2" fill="url(#cg3)" stroke="#c09020" stroke-width="0.5"/><ellipse cx="8" cy="22.0" rx="6.0" ry="2.2" fill="url(#cg3)" stroke="#c09020" stroke-width="0.5"/><ellipse cx="8" cy="19.0" rx="6.0" ry="2.2" fill="url(#cg3)" stroke="#c09020" stroke-width="0.5"/><ellipse cx="8" cy="16.0" rx="6.0" ry="2.2" fill="url(#cg3)" stroke="#c09020" stroke-width="0.5"/><circle cx="25" cy="29" r="7" fill="#3cb83c" stroke="#e8f8e0" stroke-width="1.2"/><path d="M25 25 V33 M21 29 H29" stroke="#fff" stroke-width="2.2"/></svg>
<svg class="a" style="left:1166px;top:895px" width="36" height="34" viewBox="0 0 36 34"><defs><linearGradient id="lockg" x1="0" y1="0" x2="0" y2="1"><stop offset="0" stop-color="#fff0a0"/><stop offset="1" stop-color="#e8a020"/></linearGradient></defs><path d="M3 16 V10 Q3 2.5 10.5 2.5 Q18 2.5 18 10 V15" fill="none" stroke="#b8b8b8" stroke-width="2.6"/><rect x="11" y="13" width="21" height="17" rx="2" fill="url(#lockg)" stroke="#d09018" stroke-width="0.8"/><circle cx="21.5" cy="20" r="1.5" fill="#4a3008"/><rect x="20.8" y="20" width="1.4" height="4" fill="#4a3008"/></svg>
<div class="a" style="left:0px;top:947px;width:1279px;height:29px;background:#f0f0f0;"></div>
<div class="a" style="left:0px;top:949px;width:1279px;height:1px;background:#a0a0a0;"></div>
<div class="a" style="left:0px;top:950px;width:1279px;height:1px;background:#fafafa;"></div>
<div class="a" style="left:0px;top:949px;width:1px;height:27px;background:#a0a0a0;"></div>
<div class="a" style="left:56px;top:953px;width:174px;height:18px;background:#ffffff;"></div>
<div class="a" style="left:229px;top:953px;width:17px;height:18px;background:#f0f0f0;border-top:1px solid #fff;border-left:1px solid #fff;border-right:2px solid #6a6a6a;border-bottom:2px solid #6a6a6a;box-sizing:border-box;"></div>
<svg class="a" style="left:234px;top:959px" width="8" height="5" viewBox="0 0 8 5"><path d="M0 0 H8 L4 5 Z" fill="#000"/></svg>
<div class="t" style="top:954.70px;font-size:13.3px;line-height:13.3px;color:#000;left:6px;">Ordem: Nenhum</div>
<div class="t" style="top:954.95px;font-size:13px;line-height:13px;color:#000;left:252px;">| Nº Reg.:&nbsp; 21 Registros</div>
<div class="t" style="top:954.95px;font-size:13px;line-height:13px;color:#000;left:464px;">| Terminal:&nbsp; SUPORTE04 -</div>
<div class="t" style="top:954.95px;font-size:13px;line-height:13px;color:#000;left:751px;">Val. Certificado:</div>
<div class="t" style="top:954.95px;font-size:13px;line-height:13px;color:#000;left:865px;">| Usuário:&nbsp; SUPERVISOR</div>
<div class="a" style="left:351px;top:196px;width:578px;height:630px;border-radius:8px;box-shadow:0 10px 28px rgba(0,0,0,0.26), 0 2px 8px rgba(0,0,0,0.18);"></div>
<div class="a" style="left:351px;top:196px;width:576px;height:628px;background:#f0f0f0;border:1px solid #a8a8a8;border-top-color:#fff;border-radius:8px 8px 6px 6px;"></div>
<div class="a" style="left:352px;top:197px;width:576px;height:24px;background:#f3f3f3;border-radius:7px 7px 0 0;"></div>
<svg class="a" style="left:356px;top:203px" width="15" height="12" viewBox="0 0 15 12"><rect x="0.8" y="0.8" width="10" height="9" fill="#fff" stroke="#000" stroke-width="1.4"/><path d="M1.5 1.8 H10" stroke="#0cc" stroke-width="1.2"/><path d="M12 8 L14.5 10 L12 11.5" fill="#888"/></svg>
<div class="t" style="top:202.38px;font-size:12.5px;line-height:12.5px;color:#9a9a9a;font-weight:normal;left:375px;">Definição do Pagamento</div>
<svg class="a" style="left:909px;top:203px" width="10" height="10" viewBox="0 0 10 10"><path d="M0 0 L10 10 M10 0 L0 10" stroke="#7a7a7a" stroke-width="1"/></svg>
<div class="a" style="left:352px;top:221px;width:575px;height:99px;background:#0f4b7d;border-top:1px solid #04238a;box-sizing:border-box;"></div>
<div class="t" style="top:231.30px;font-size:37.3px;line-height:37.3px;color:#fff;font-style:italic;left:238px;width:800px;text-align:center;">Definição do Pagamento</div>
<div class="t" style="top:283.10px;font-size:24px;line-height:24px;color:#fff;left:237.5px;width:800px;text-align:center;">Valor Total da Venda: 269,18</div>
<div class="a" style="left:352px;top:320px;width:575px;height:376px;background:#f0f0f0;"></div>
<div class="a" style="left:359px;top:327px;width:134px;height:136px;background:#fff;border-top:1px solid #fff;border-left:1px solid #fff;border-right:1px solid #a0a0a0;border-bottom:1px solid #a0a0a0;box-sizing:border-box;"></div>
<div class="a" style="left:361px;top:329px;width:131px;height:133px;border-top:1px solid #a0a0a0;border-left:1px solid #a0a0a0;box-sizing:border-box;"></div>
<div class="t" style="top:333.18px;font-size:14.5px;line-height:14.5px;color:#000;letter-spacing:0.35px;left:367px;">Cheque</div>
<div class="t" style="top:431.85px;font-size:19px;line-height:19px;color:#000;right:805px;text-align:right;">0,00</div>
<svg class="a" style="left:359px;top:327px" width="134" height="136" viewBox="0 0 134 136"><defs><linearGradient id="chq" x1="0" y1="0" x2="0" y2="1"><stop offset="0" stop-color="#e4f2f8"/><stop offset="0.6" stop-color="#c4e0ec"/><stop offset="1" stop-color="#9cc8dc"/></linearGradient><linearGradient id="pen" x1="0" y1="0" x2="1" y2="0"><stop offset="0" stop-color="#1a1a20"/><stop offset="0.5" stop-color="#50505a"/><stop offset="1" stop-color="#18181c"/></linearGradient></defs><rect x="34.3" y="53" width="65" height="24.5" rx="2" fill="url(#chq)" stroke="#9cc4d4" stroke-width="0.8"/><rect x="38" y="56" width="19" height="2.2" rx="1" fill="#4a88b0"/><path d="M38 61 H78 M38 63.2 H78 M38 65.4 H78 M38 73 H68" stroke="#78a8c0" stroke-width="0.7"/><path d="M69 70 L73 74.5 L81 64" stroke="#3a7ea8" stroke-width="1.3" fill="none"/><g transform="rotate(33 93 55)"><rect x="89.5" y="38" width="7.5" height="30" rx="3.5" fill="url(#pen)"/><rect x="89.5" y="53" width="7.5" height="3" fill="#c8a040"/><rect x="92.3" y="40" width="1.2" height="12" fill="#d8a040"/><circle cx="93.2" cy="70" r="2.8" fill="#f0a020"/></g></svg>
<div class="a" style="left:360px;top:466px;width:132px;height:36px;background:#dcdcdc;"></div>
<div class="t" style="top:477.02px;font-size:13.5px;line-height:13.5px;color:#000;transform:scaleX(0.88);transform-origin:left center;left:400px;">Cheque</div>
<svg class="a" style="left:369px;top:479px" width="24" height="12" viewBox="0 0 24 12"><rect x="0.5" y="0.5" width="23" height="11" fill="#c8e8b0" stroke="#8ab870"/><rect x="3" y="4" width="10" height="2" fill="#fff"/><circle cx="19" cy="5" r="2" fill="#6a9a50"/></svg>
<div class="a" style="left:499px;top:327px;width:134px;height:136px;background:#fff;border-top:1px solid #fff;border-left:1px solid #fff;border-right:1px solid #a0a0a0;border-bottom:1px solid #a0a0a0;box-sizing:border-box;"></div>
<div class="a" style="left:501px;top:329px;width:131px;height:133px;border-top:1px solid #a0a0a0;border-left:1px solid #a0a0a0;box-sizing:border-box;"></div>
<div class="t" style="top:333.18px;font-size:14.5px;line-height:14.5px;color:#000;letter-spacing:0.35px;left:507px;">Cartão</div>
<div class="t" style="top:431.85px;font-size:19px;line-height:19px;color:#000;right:665px;text-align:right;">0,00</div>
<svg class="a" style="left:499px;top:327px" width="134" height="136" viewBox="0 0 134 136"><defs><linearGradient id="cy" x1="0" y1="1" x2="1" y2="0"><stop offset="0" stop-color="#f0a838"/><stop offset="0.6" stop-color="#f8cc28"/><stop offset="1" stop-color="#f8e020"/></linearGradient><linearGradient id="cb" x1="0" y1="0" x2="1" y2="1"><stop offset="0" stop-color="#5ab0ec"/><stop offset="1" stop-color="#2888d8"/></linearGradient></defs><path d="M23 61.5 L68 31.4 Q71.2 29.4 74.4 31.4 L105.5 50.4 Q108.5 52.4 105.5 54.6 L60 85 Q57 86.5 54 84.6 L22.5 66 Q19.5 63.5 23 61.5 Z" fill="url(#cy)" stroke="#d89828" stroke-width="0.6"/><path d="M25.1 66.5 L76.3 32.5 L81.5 35.7 L30.3 69.7 Z" fill="#a87028" opacity="0.85"/><path d="M22 63 L70 31 L74 33.5 L26 65.5 Z" fill="#f8c870" opacity="0.6"/><circle cx="85.8" cy="56" r="6" fill="#e82828"/><circle cx="95.7" cy="52.2" r="6.5" fill="#f0a030" opacity="0.85"/><rect x="33.8" y="57.4" width="77.4" height="36.1" rx="4" fill="url(#cb)" stroke="#2a78c0" stroke-width="0.5"/><path d="M37.8 57.4 H95 L44 93.5 H37.8 Q33.8 93.5 33.8 89.5 V61.4 Q33.8 57.4 37.8 57.4 Z" fill="#80c8f4" opacity="0.45"/><rect x="33.8" y="62.6" width="77.4" height="6" fill="#1a5a8c"/><rect x="33.8" y="62.6" width="45" height="6" fill="#4a88b8" opacity="0.7"/><path d="M40 75.5 H52 M57 75.5 H69 M74 75.5 H86 M91 75.5 H103" stroke="#2a6aa0" stroke-width="1.2" stroke-dasharray="1.5 1"/><rect x="84" y="81" width="22" height="10" fill="#fff"/><rect x="85" y="82" width="20" height="1.6" fill="#1a3a8a"/><rect x="85" y="88.5" width="20" height="1.2" fill="#e8a020"/><text x="88" y="88" font-size="5.5" font-weight="bold" font-style="italic" fill="#1a3a8a" font-family="Liberation Sans">VISA</text></svg>
<div class="a" style="left:500px;top:466px;width:132px;height:36px;background:#dcdcdc;"></div>
<div class="t" style="top:477.02px;font-size:13.5px;line-height:13.5px;color:#000;transform:scaleX(0.88);transform-origin:left center;left:540px;">Cartão</div>
<svg class="a" style="left:506px;top:469px" width="30" height="32" viewBox="0 0 30 32"><rect x="1" y="1" width="20" height="16" rx="2" fill="#f8b030" stroke="#c08010"/><circle cx="9" cy="9" r="3" fill="#e03030"/><circle cx="13" cy="9" r="3" fill="#f08020"/><rect x="7" y="13" width="22" height="18" rx="2" fill="#3a88d8" stroke="#1a5aa8"/><rect x="10" y="18" width="16" height="6" fill="#fff"/><rect x="11" y="19" width="14" height="2" fill="#1a3a98"/></svg>
<div class="a" style="left:639px;top:327px;width:134px;height:136px;background:#fff;border-top:1px solid #fff;border-left:1px solid #fff;border-right:1px solid #a0a0a0;border-bottom:1px solid #a0a0a0;box-sizing:border-box;"></div>
<div class="a" style="left:641px;top:329px;width:131px;height:133px;border-top:1px solid #a0a0a0;border-left:1px solid #a0a0a0;box-sizing:border-box;"></div>
<div class="t" style="top:333.18px;font-size:14.5px;line-height:14.5px;color:#000;letter-spacing:0.35px;left:647px;">Transf. / PIX</div>
<div class="t" style="top:431.85px;font-size:19px;line-height:19px;color:#000;right:525px;text-align:right;">0,00</div>
<svg class="a" style="left:663px;top:359px" width="89" height="60" viewBox="0 0 89 60"><g transform="translate(44.5 30) scale(1.05 1.06) translate(-44.5 -30)"><path d="M38.3 4.2 Q44.5 0 50.7 4.2 L83.5 26.3 Q89 30 83.5 33.7 L50.7 55.8 Q44.5 60 38.3 55.8 L5.5 33.7 Q0 30 5.5 26.3 Z" fill="#02bfb2"/><path d="M-1 15.7 H18 Q22 15.7 26 18.4 L40 27 Q44.5 29.7 49 27 L63 18.4 Q67 15.7 71 15.7 H90" stroke="#fff" stroke-width="2.5" fill="none"/><path d="M-1 44.3 H18 Q22 44.3 26 41.6 L40 33 Q44.5 30.3 49 33 L63 41.6 Q67 44.3 71 44.3 H90" stroke="#fff" stroke-width="2.5" fill="none"/></g></svg>
<div class="a" style="left:640px;top:466px;width:132px;height:36px;background:#dcdcdc;"></div>
<div class="t" style="top:477.02px;font-size:13.5px;line-height:13.5px;color:#000;transform:scaleX(0.88);transform-origin:left center;left:680px;">Transf. / PIX</div>
<svg class="a" style="left:646px;top:469px" width="30" height="31" viewBox="0 0 30 31"><path d="M15 0 L22 7 L15 14 L8 7 Z M15 17 L22 24 L15 31 L8 24 Z M0 15.5 L7 8.5 L14 15.5 L7 22.5 Z M16 15.5 L23 8.5 L30 15.5 L23 22.5 Z" fill="#25bfad"/></svg>
<div class="a" style="left:779px;top:327px;width:134px;height:136px;background:#fff;border-top:1px solid #fff;border-left:1px solid #fff;border-right:1px solid #a0a0a0;border-bottom:1px solid #a0a0a0;box-sizing:border-box;"></div>
<div class="a" style="left:781px;top:329px;width:131px;height:133px;border-top:1px solid #a0a0a0;border-left:1px solid #a0a0a0;box-sizing:border-box;"></div>
<div class="t" style="top:333.18px;font-size:14.5px;line-height:14.5px;color:#000;letter-spacing:0.35px;left:787px;">Duplicata</div>
<div class="t" style="top:431.85px;font-size:19px;line-height:19px;color:#000;right:385px;text-align:right;">0,00</div>
<svg class="a" style="left:779px;top:327px" width="134" height="136" viewBox="0 0 134 136"><path d="M35 64 L96 60 L95.5 87.5 L33.2 82.3 Z" fill="#f4f4f4" stroke="#e8a840" stroke-width="1.6"/><text x="85" y="86" font-size="7.5" fill="#e8b860" font-family="Liberation Sans">$30</text><path d="M36 70 H42 M36 73 H42" stroke="#333" stroke-width="1.4"/><path d="M32.3 39.3 L94.7 33.3 L97.5 62 L36.2 65.6 Z" fill="#fafafa" stroke="#20a090" stroke-width="1.6"/><path d="M38 44 L70 41.2 M38.6 49.6 L66 47.4" stroke="#2a2e38" stroke-width="2.2"/><path d="M39 57 L75 54" stroke="#333" stroke-width="1.2"/><polygon points="93.40,43.60 91.06,45.76 91.68,48.89 88.51,49.26 87.18,52.16 84.40,50.60 81.62,52.16 80.29,49.26 77.12,48.89 77.74,45.76 75.40,43.60 77.74,41.44 77.12,38.31 80.29,37.94 81.62,35.04 84.40,36.60 87.18,35.04 88.51,37.94 91.68,38.31 91.06,41.44" fill="#20a090"/><circle cx="84.4" cy="43.6" r="5.5" fill="#3ab8a0"/><rect x="45.6" y="51.8" width="61.5" height="26" fill="#f8f8f8" stroke="#e05050" stroke-width="1.7"/><path d="M45.6 72 Q70 66 107 68 V77.6 H45.6 Z" fill="#e4e4e4"/><path d="M50.5 56.2 H78.5 M50.5 60.8 H73.5" stroke="#2a2e38" stroke-width="2.2"/><path d="M50.5 65.2 H81.5 M50.5 67.6 H77" stroke="#555" stroke-width="1"/><polygon points="104.50,60.80 102.16,62.96 102.78,66.09 99.61,66.46 98.28,69.36 95.50,67.80 92.72,69.36 91.39,66.46 88.22,66.09 88.84,62.96 86.50,60.80 88.84,58.64 88.22,55.51 91.39,55.14 92.72,52.24 95.50,53.80 98.28,52.24 99.61,55.14 102.78,55.51 102.16,58.64" fill="#e05050"/><circle cx="95.5" cy="60.8" r="5.5" fill="#e87878"/><text x="93.5" y="75.8" font-size="7.5" fill="#d05050" font-family="Liberation Sans">$70</text></svg>
<div class="a" style="left:780px;top:466px;width:132px;height:36px;background:#dcdcdc;"></div>
<div class="t" style="top:477.02px;font-size:13.5px;line-height:13.5px;color:#6d6d6d;transform:scaleX(0.88);transform-origin:left center;left:820px;">Duplicata</div>
<svg class="a" style="left:786px;top:469px" width="28" height="31" viewBox="0 0 28 31"><rect x="4" y="1" width="22" height="28" rx="1" fill="#eee" stroke="#777" stroke-width="1"/><path d="M2 5 H6 M2 9 H6 M2 13 H6 M2 17 H6 M2 21 H6 M2 25 H6" stroke="#555" stroke-width="1.2"/><path d="M10 8 H22 M10 12 H22 M10 16 H18" stroke="#888"/><path d="M12 26 L24 10 L26 12 L14 28 Z" fill="#aaa" stroke="#666" stroke-width="0.6"/></svg>
<div class="a" style="left:359px;top:511px;width:134px;height:136px;background:#fff;border-top:1px solid #fff;border-left:1px solid #fff;border-right:1px solid #a0a0a0;border-bottom:1px solid #a0a0a0;box-sizing:border-box;"></div>
<div class="a" style="left:361px;top:513px;width:131px;height:133px;border-top:1px solid #a0a0a0;border-left:1px solid #a0a0a0;box-sizing:border-box;"></div>
<div class="t" style="top:517.17px;font-size:14.5px;line-height:14.5px;color:#6d6d6d;letter-spacing:0.35px;left:367px;">Financeira</div>
<div class="t" style="top:615.85px;font-size:19px;line-height:19px;color:#6d6d6d;right:805px;text-align:right;">0,00</div>
<svg class="a" style="left:359px;top:511px" width="134" height="136" viewBox="0 0 134 136"><defs><radialGradient id="gf" cx="50%" cy="20%" r="80%"><stop offset="0" stop-color="#5ab85a"/><stop offset="0.5" stop-color="#1a8a2a"/><stop offset="1" stop-color="#0a5a14"/></radialGradient><linearGradient id="ring" x1="0" y1="0" x2="0" y2="1"><stop offset="0" stop-color="#f8f8f8"/><stop offset="0.5" stop-color="#a8a8a8"/><stop offset="1" stop-color="#f0f0f0"/></linearGradient></defs><ellipse cx="67" cy="88.5" rx="34" ry="1.6" fill="#c8c8c8"/><ellipse cx="67" cy="60.8" rx="43.5" ry="28.5" fill="url(#ring)" stroke="#0a5a1a" stroke-width="1.2"/><ellipse cx="67" cy="60.8" rx="36.5" ry="23" fill="url(#gf)" stroke="#0a4a10" stroke-width="0.8"/><path d="M62 44 Q58 41 60 38.5 Q67 37 74 38.5 Q76 41 72 44 L70.5 46 Q84 56 82 70 Q82 73 78 73 H56 Q52 73 52 70 Q50 56 63.5 46 Z" fill="#fff"/><path d="M72 44 L79 41" stroke="#fff" stroke-width="1"/><text x="59" y="70" font-size="15" font-weight="bold" fill="#148a24" font-family="Liberation Sans">$</text></svg>
<div class="a" style="left:360px;top:650px;width:132px;height:36px;background:#dcdcdc;"></div>
<div class="t" style="top:661.02px;font-size:13.5px;line-height:13.5px;color:#6d6d6d;transform:scaleX(0.88);transform-origin:left center;left:400px;">Financeira</div>
<svg class="a" style="left:368px;top:653px" width="28" height="32" viewBox="0 0 28 32"><path d="M10 1 H20 L14 12 H20 L8 28 L11 16 H5 Z" fill="#f0f0f0" stroke="#777" stroke-width="1"/><circle cx="20" cy="24" r="7" fill="#8a8a8a" stroke="#fff" stroke-width="1.2"/><path d="M20 20 V28 M16 24 H24" stroke="#fff" stroke-width="2"/></svg>
<div class="a" style="left:499px;top:511px;width:134px;height:136px;background:#fff;border-top:1px solid #fff;border-left:1px solid #fff;border-right:1px solid #a0a0a0;border-bottom:1px solid #a0a0a0;box-sizing:border-box;"></div>
<div class="a" style="left:501px;top:513px;width:131px;height:133px;border-top:1px solid #a0a0a0;border-left:1px solid #a0a0a0;box-sizing:border-box;"></div>
<div class="t" style="top:517.17px;font-size:14.5px;line-height:14.5px;color:#6d6d6d;letter-spacing:0.35px;left:507px;">Boleto</div>
<div class="t" style="top:615.85px;font-size:19px;line-height:19px;color:#6d6d6d;right:665px;text-align:right;">0,00</div>
<svg class="a" style="left:499px;top:511px" width="134" height="136" viewBox="0 0 134 136"><defs><linearGradient id="bg1" x1="0" x2="1"><stop offset="0" stop-color="#909090"/><stop offset="0.2" stop-color="#c8c8c8"/><stop offset="0.35" stop-color="#a8a8a8"/><stop offset="0.5" stop-color="#d8d8d8"/><stop offset="0.7" stop-color="#c0c0c0"/><stop offset="1" stop-color="#f4f4f4"/></linearGradient><linearGradient id="curl" x1="0" y1="1" x2="1" y2="0"><stop offset="0" stop-color="#ffffff"/><stop offset="1" stop-color="#b8b8b8"/></linearGradient></defs><path d="M21 28 H113 V77 L96 94 H21 Q19 94 19 92 V30 Q19 28 21 28 Z" fill="url(#bg1)"/><rect x="24.5" y="28" width="3.5" height="66" fill="#0a0a0a"/><rect x="33" y="28" width="5" height="66" fill="#0a0a0a"/><rect x="46" y="28" width="6" height="66" fill="#0a0a0a"/><rect x="58.5" y="28" width="3" height="66" fill="#0a0a0a"/><rect x="73" y="28" width="3" height="66" fill="#0a0a0a"/><rect x="79.5" y="28" width="7" height="66" fill="#0a0a0a"/><rect x="100.5" y="28" width="3" height="66" fill="#0a0a0a"/><rect x="108.5" y="28" width="3" height="66" fill="#0a0a0a"/><rect x="19" y="61" width="94" height="33" fill="#ffffff" opacity="0.22"/><path d="M96 94 L117.5 76.5 Q104 78 100 80 Q97 84 96 94 Z" fill="url(#curl)" stroke="#b0b0b0" stroke-width="0.4"/></svg>
<div class="a" style="left:500px;top:650px;width:132px;height:36px;background:#dcdcdc;"></div>
<div class="t" style="top:661.02px;font-size:13.5px;line-height:13.5px;color:#6d6d6d;transform:scaleX(0.88);transform-origin:left center;left:540px;">Gerar Boleto</div>
<svg class="a" style="left:507px;top:659px" width="30" height="20" viewBox="0 0 30 20"><path d="M2 1 H24 L29 6 V19 H2 Q1 19 1 18 V2 Q1 1 2 1 Z" fill="#fff" stroke="#222" stroke-width="1.5"/><rect x="6" y="5" width="1.5" height="11" fill="#222"/><rect x="9" y="5" width="1" height="11" fill="#222"/><rect x="11" y="5" width="2" height="11" fill="#222"/><rect x="14" y="5" width="1" height="11" fill="#222"/><rect x="16" y="5" width="1.5" height="11" fill="#222"/><rect x="19" y="5" width="1" height="11" fill="#222"/><rect x="21" y="5" width="2" height="11" fill="#222"/></svg>
<div class="a" style="left:639px;top:511px;width:134px;height:136px;background:#fff;border-top:1px solid #fff;border-left:1px solid #fff;border-right:1px solid #a0a0a0;border-bottom:1px solid #a0a0a0;box-sizing:border-box;"></div>
<div class="a" style="left:641px;top:513px;width:131px;height:133px;border-top:1px solid #a0a0a0;border-left:1px solid #a0a0a0;box-sizing:border-box;"></div>
<div class="t" style="top:517.17px;font-size:14.5px;line-height:14.5px;color:#000;letter-spacing:0.35px;left:647px;">Vale Cédito</div>
<div class="t" style="top:615.85px;font-size:19px;line-height:19px;color:#000;right:525px;text-align:right;">0,00</div>
<svg class="a" style="left:639px;top:511px" width="134" height="136" viewBox="0 0 134 136"><path d="M62.4 37.5 L108.4 44 L90 83.5 L41.8 78.3 Z" fill="#fdfdfd" stroke="#1a1a1a" stroke-width="1.4" stroke-linejoin="round"/><path d="M108.4 44 L110 47 L92 86 L90 83.5 Z" fill="#555" stroke="#111" stroke-width="0.8"/><path d="M41.8 78.3 L41 81 L90.5 86.5 L92 86" fill="none" stroke="#1a1a1a" stroke-width="1.6"/><ellipse cx="66.0" cy="38.5" rx="3.2" ry="2.2" fill="none" stroke="#111" stroke-width="1.6"/><ellipse cx="74.5" cy="39.7" rx="3.2" ry="2.2" fill="none" stroke="#111" stroke-width="1.6"/><ellipse cx="83.0" cy="40.9" rx="3.2" ry="2.2" fill="none" stroke="#111" stroke-width="1.6"/><ellipse cx="91.5" cy="42.1" rx="3.2" ry="2.2" fill="none" stroke="#111" stroke-width="1.6"/><ellipse cx="100.0" cy="43.3" rx="3.2" ry="2.2" fill="none" stroke="#111" stroke-width="1.6"/><path d="M67 48 Q71 46 76 48.5 M63 54 Q72 52 86 56 M62 58.5 Q70 57 84 60 M60 63 Q70 62 82 64.5 M58 68 Q68 67 80 69 M56 73 Q64 72 74 74" stroke="#333" stroke-width="0.9" fill="none" stroke-dasharray="3 1"/><path d="M23.5 38.5 Q28 34 32 37 L61.6 71.5 L54 69 Z" fill="#fff" stroke="none"/><path d="M24 41 L52 68.5 L61.6 71.5 L58.5 62.5 L30.5 35.5" fill="#fafafa" stroke="#111" stroke-width="1.8" stroke-linejoin="round"/><path d="M52 68.5 L58.5 62.5" stroke="#333" stroke-width="1"/><ellipse cx="27.2" cy="38.2" rx="4.8" ry="3" transform="rotate(-45 27.2 38.2)" fill="#fff" stroke="#111" stroke-width="1.5"/><ellipse cx="27.5" cy="38" rx="1.8" ry="1" transform="rotate(-45 27.5 38)" fill="#111"/><path d="M59 70.5 L61.6 71.5 L60.5 68.5 Z" fill="#111"/></svg>
<div class="a" style="left:637px;top:646px;width:136px;height:44px;border:2px solid #e01818;box-sizing:border-box;"></div>
<div class="a" style="left:640px;top:649px;width:130px;height:38px;background:#dcdcdc;box-shadow:1px 1px 2px rgba(0,0,0,0.35);"></div>
<div class="t" style="top:660.52px;font-size:13.5px;line-height:13.5px;color:#000;transform:scaleX(0.9);transform-origin:left center;left:682px;">Vale Crédito</div>
<svg class="a" style="left:651px;top:653px" width="28" height="32" viewBox="0 0 28 32"><path d="M9 1 H22 L15 12 H22 L7 30 L11 17 H4 Z" fill="#f8d040" stroke="#b08a10" stroke-width="1"/><circle cx="20" cy="25" r="7" fill="#e84040" stroke="#fff" stroke-width="1.2"/><rect x="15.5" y="23.5" width="9" height="3" fill="#fff"/></svg>
<div class="a" style="left:779px;top:511px;width:134px;height:136px;background:#fff;border-top:1px solid #fff;border-left:1px solid #fff;border-right:1px solid #a0a0a0;border-bottom:1px solid #a0a0a0;box-sizing:border-box;"></div>
<div class="a" style="left:781px;top:513px;width:131px;height:133px;border-top:1px solid #a0a0a0;border-left:1px solid #a0a0a0;box-sizing:border-box;"></div>
<div class="t" style="top:517.17px;font-size:14.5px;line-height:14.5px;color:#000;letter-spacing:0.35px;left:787px;">Dinheiro</div>
<div class="t" style="top:615.85px;font-size:19px;line-height:19px;color:#000;right:385px;text-align:right;">0,00</div>
<svg class="a" style="left:779px;top:511px" width="134" height="136" viewBox="0 0 134 136"><defs><linearGradient id="mon" x1="0" y1="0" x2="0" y2="1"><stop offset="0" stop-color="#c4dcb0"/><stop offset="1" stop-color="#a8c890"/></linearGradient><linearGradient id="coin" x1="0" x2="1"><stop offset="0" stop-color="#a87818"/><stop offset="0.45" stop-color="#f8e088"/><stop offset="1" stop-color="#a07010"/></linearGradient></defs><ellipse cx="62" cy="81" rx="34" ry="1.5" fill="#d0d0d0"/><path d="M27 42 Q50 39 67 43 Q88 39 108 41 L110.4 77 Q88 79 67 77 Q48 80 25.5 79 Z" fill="#78a858"/><path d="M29 45 Q50 42 67 46 Q88 42 106 44 L108 76 Q88 78 67 75 Q48 78 28 77 Z" fill="url(#mon)" stroke="#6a9a50" stroke-width="0.8"/><path d="M33 48 Q50 46 67 49 Q86 46 102 47 L104 73 Q86 74 67 72 Q48 75 32 74 Z" fill="none" stroke="#88b070" stroke-width="1"/><circle cx="67.3" cy="60.3" r="13" fill="#8ab870" stroke="#a8c890" stroke-width="1.5"/><circle cx="67.3" cy="56.5" r="4.5" fill="#a8c890"/><path d="M58 70 Q60 63 67.3 62.5 Q75 63 77 70 Z" fill="#a8c890"/><circle cx="44.3" cy="62.2" r="5" fill="none" stroke="#7aa860" stroke-width="1.2"/><circle cx="44.3" cy="62.2" r="2.5" fill="none" stroke="#8ab870" stroke-width="0.8"/><ellipse cx="88.2" cy="81.1" rx="7.75" ry="2" fill="url(#coin)" stroke="#7a5a08" stroke-width="0.5"/><ellipse cx="88.2" cy="77.9" rx="7.75" ry="2" fill="url(#coin)" stroke="#7a5a08" stroke-width="0.5"/><ellipse cx="88.2" cy="74.7" rx="7.75" ry="2" fill="url(#coin)" stroke="#7a5a08" stroke-width="0.5"/><ellipse cx="88.2" cy="71.5" rx="7.75" ry="2" fill="url(#coin)" stroke="#7a5a08" stroke-width="0.5"/><ellipse cx="88.2" cy="68.3" rx="7.75" ry="2" fill="url(#coin)" stroke="#7a5a08" stroke-width="0.5"/><ellipse cx="88.2" cy="65.1" rx="7.75" ry="2" fill="url(#coin)" stroke="#7a5a08" stroke-width="0.5"/><ellipse cx="88.2" cy="61.9" rx="7.75" ry="2" fill="url(#coin)" stroke="#7a5a08" stroke-width="0.5"/><ellipse cx="88.2" cy="58.7" rx="7.75" ry="2" fill="url(#coin)" stroke="#7a5a08" stroke-width="0.5"/><ellipse cx="88.2" cy="55.5" rx="7.75" ry="2" fill="url(#coin)" stroke="#7a5a08" stroke-width="0.5"/><ellipse cx="93.3" cy="79.1" rx="7.3" ry="2" fill="url(#coin)" stroke="#7a5a08" stroke-width="0.5"/><ellipse cx="93.3" cy="75.9" rx="7.3" ry="2" fill="url(#coin)" stroke="#7a5a08" stroke-width="0.5"/><ellipse cx="93.3" cy="72.7" rx="7.3" ry="2" fill="url(#coin)" stroke="#7a5a08" stroke-width="0.5"/><ellipse cx="93.3" cy="69.5" rx="7.3" ry="2" fill="url(#coin)" stroke="#7a5a08" stroke-width="0.5"/><ellipse cx="81.6" cy="79.2" rx="7.3" ry="2" fill="url(#coin)" stroke="#7a5a08" stroke-width="0.5"/><ellipse cx="81.6" cy="76.0" rx="7.3" ry="2" fill="url(#coin)" stroke="#7a5a08" stroke-width="0.5"/></svg>
<div class="a" style="left:780px;top:650px;width:132px;height:36px;background:#dcdcdc;"></div>
<div class="t" style="top:661.02px;font-size:13.5px;line-height:13.5px;color:#000;transform:scaleX(0.88);transform-origin:left center;left:820px;">Dinheiro</div>
<svg class="a" style="left:785px;top:651px" width="36" height="34" viewBox="0 0 36 34"><defs><linearGradient id="cn2" x1="0" x2="1"><stop offset="0" stop-color="#d8a020"/><stop offset="0.5" stop-color="#fff0a0"/><stop offset="1" stop-color="#d0a030"/></linearGradient></defs><ellipse cx="9" cy="31" rx="7.5" ry="3" fill="url(#cn2)" stroke="#b08010" stroke-width="0.6"/><ellipse cx="9" cy="28" rx="7.5" ry="3" fill="url(#cn2)" stroke="#b08010" stroke-width="0.6"/><ellipse cx="9" cy="25" rx="7.5" ry="3" fill="url(#cn2)" stroke="#b08010" stroke-width="0.6"/><ellipse cx="9" cy="22" rx="7.5" ry="3" fill="url(#cn2)" stroke="#b08010" stroke-width="0.6"/><ellipse cx="27" cy="31" rx="7.5" ry="3" fill="url(#cn2)" stroke="#b08010" stroke-width="0.6"/><ellipse cx="27" cy="28" rx="7.5" ry="3" fill="url(#cn2)" stroke="#b08010" stroke-width="0.6"/><ellipse cx="27" cy="25" rx="7.5" ry="3" fill="url(#cn2)" stroke="#b08010" stroke-width="0.6"/><ellipse cx="27" cy="22" rx="7.5" ry="3" fill="url(#cn2)" stroke="#b08010" stroke-width="0.6"/><ellipse cx="18" cy="27" rx="7.5" ry="3" fill="url(#cn2)" stroke="#b08010" stroke-width="0.6"/><ellipse cx="18" cy="24" rx="7.5" ry="3" fill="url(#cn2)" stroke="#b08010" stroke-width="0.6"/><ellipse cx="18" cy="21" rx="7.5" ry="3" fill="url(#cn2)" stroke="#b08010" stroke-width="0.6"/><ellipse cx="18" cy="18" rx="7.5" ry="3" fill="url(#cn2)" stroke="#b08010" stroke-width="0.6"/><ellipse cx="18" cy="15" rx="7.5" ry="3" fill="url(#cn2)" stroke="#b08010" stroke-width="0.6"/><ellipse cx="18" cy="12" rx="7.5" ry="3" fill="url(#cn2)" stroke="#b08010" stroke-width="0.6"/><ellipse cx="18" cy="9" rx="7.5" ry="3" fill="url(#cn2)" stroke="#b08010" stroke-width="0.6"/><ellipse cx="18" cy="6" rx="7.5" ry="3" fill="url(#cn2)" stroke="#b08010" stroke-width="0.6"/><ellipse cx="18" cy="3" rx="7.5" ry="3" fill="url(#cn2)" stroke="#b08010" stroke-width="0.6"/></svg>
<div class="a" style="left:352px;top:696px;width:575px;height:127px;background:#0f4b7d;border-top:1px solid #04238a;box-sizing:border-box;"></div>
<div class="t" style="top:707.40px;font-size:16px;line-height:16px;color:#fff;left:363px;">Informe o CPF ou CNPJ</div>
<div class="a" style="left:363px;top:728px;width:194px;height:19px;background:#ffffff;border:1px solid #5a5a5a;"></div>
<div class="t" style="top:706.39px;font-size:21.3px;line-height:21.3px;color:#fff;right:364.5px;text-align:right;">Valor Recebido: 0,00</div>
<div class="t" style="top:733.89px;font-size:21.3px;line-height:21.3px;color:#fff;right:364.5px;text-align:right;">Troco: -269,18</div>
<div class="a" style="left:353px;top:764px;width:570px;height:1px;background:#e8eef4;"></div>
<div class="a" style="left:363px;top:776px;width:162px;height:38px;background:#f0f0f0;"></div>
<svg class="a" style="left:369px;top:779px" width="33" height="32" viewBox="0 0 33 32"><defs><linearGradient id="lg" x1="0" y1="0" x2="0" y2="1"><stop offset="0" stop-color="#d8f060"/><stop offset="0.5" stop-color="#b0d820"/><stop offset="1" stop-color="#88b810"/></linearGradient></defs><path d="M1.5 14.5 Q3 5 15 5 H19.5 V1.2 L27.5 7.8 L19.5 14.2 V10.8 H15 Q9 10.8 7.5 15 Z" fill="url(#lg)" stroke="#4a8a00" stroke-width="1" stroke-linejoin="round"/><path d="M30.5 17.5 Q29 27 17 27 H12.5 V30.8 L4.5 24.2 L12.5 17.8 V21.2 H17 Q23 21.2 24.5 17 Z" fill="url(#lg)" stroke="#4a8a00" stroke-width="1" stroke-linejoin="round"/></svg>
<div class="t" style="top:788.28px;font-size:13.2px;line-height:13.2px;color:#000;transform:scaleX(0.88);transform-origin:left center;left:404px;">Limpar Pagamentos</div>
<div class="t" style="top:787.10px;font-size:14px;line-height:14px;color:#fff;transform:scaleX(0.955);transform-origin:left center;left:569.5px;">Nº Documento:</div>
<div class="a" style="left:667px;top:785px;width:96px;height:17px;background:#ffffc0;border:1px solid #8a6a3a;"></div>
<div class="t" style="top:788.02px;font-size:13.5px;line-height:13.5px;color:#000;left:316px;width:800px;text-align:center;">24</div>
<div class="a" style="left:813px;top:776px;width:104px;height:38px;background:#f0f0f0;"></div>
<div class="a" style="left:818px;top:781px;width:94px;height:28px;border:1px dotted #000;box-sizing:border-box;"></div>
<svg class="a" style="left:820px;top:781px" width="30" height="30" viewBox="0 0 30 30"><defs><radialGradient id="gc" cx="50%" cy="25%" r="70%"><stop offset="0" stop-color="#a8e878"/><stop offset="0.6" stop-color="#4ab83a"/><stop offset="1" stop-color="#1a8a1a"/></radialGradient></defs><circle cx="15" cy="15" r="14.3" fill="#e8e8e8" stroke="#b8b8b8" stroke-width="0.8"/><circle cx="15" cy="15" r="12.5" fill="url(#gc)"/><path d="M7.5 15.5 L13 21 L23 8.5" stroke="#fff" stroke-width="4.2" fill="none" stroke-linejoin="round" stroke-linecap="round"/></svg>
<div class="t" style="top:788.28px;font-size:13.2px;line-height:13.2px;color:#000;transform:scaleX(0.86);transform-origin:left center;left:854px;">Confirmar</div>
</body></html>
